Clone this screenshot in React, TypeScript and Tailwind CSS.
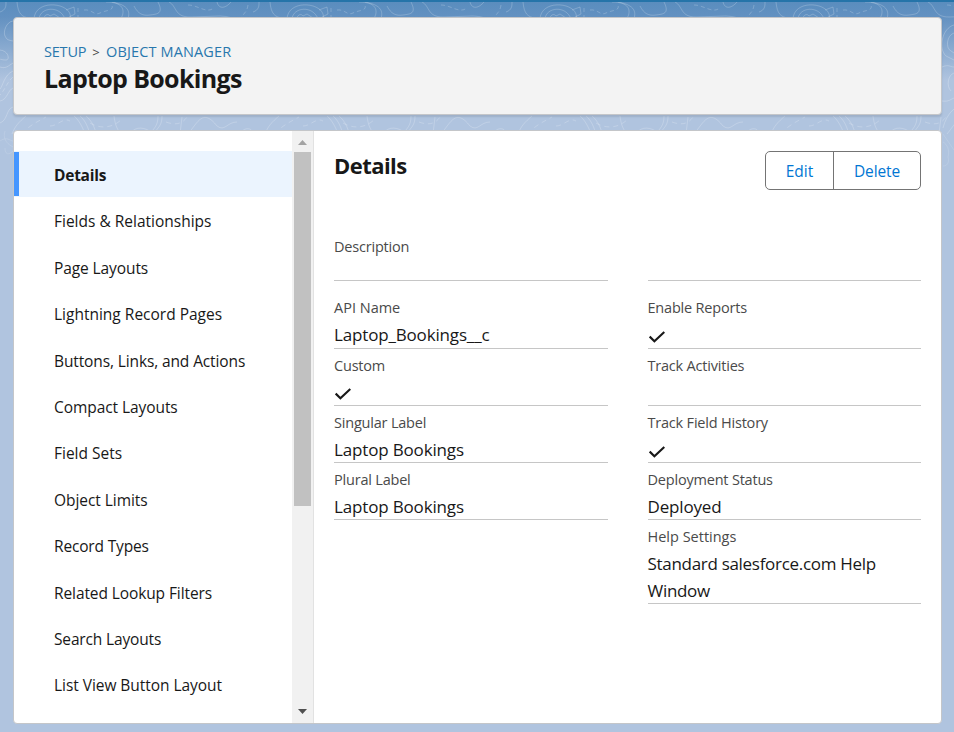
import { ReactNode } from "react";

const navItems: { label: string; track: string }[] = [
  { label: "Details", track: "tracking-[-0.25px]" },
  { label: "Fields & Relationships", track: "tracking-[0px]" },
  { label: "Page Layouts", track: "tracking-[-0.1px]" },
  { label: "Lightning Record Pages", track: "tracking-[0px]" },
  { label: "Buttons, Links, and Actions", track: "tracking-[-0.12px]" },
  { label: "Compact Layouts", track: "tracking-[-0.07px]" },
  { label: "Field Sets", track: "tracking-[0px]" },
  { label: "Object Limits", track: "tracking-[-0.05px]" },
  { label: "Record Types", track: "tracking-[-0.17px]" },
  { label: "Related Lookup Filters", track: "tracking-[-0.1px]" },
  { label: "Search Layouts", track: "tracking-[-0.15px]" },
  { label: "List View Button Layout", track: "tracking-[-0.05px]" },
];

function Check({ spacing = "mt-[10px]" }: { spacing?: string }) {
  return (
    <svg className={`${spacing} ml-px block h-3 w-4`} viewBox="0 0 16 12" fill="none">
      <path d="M0.7 5.6 5.4 10.3 15.3 0.9" stroke="#181818" strokeWidth="2.1" />
    </svg>
  );
}

type FieldProps = {
  label: string;
  children?: ReactNode;
  height?: string;
  labelTrack?: string;
  valueTrack?: string;
};

function Field({
  label,
  children,
  height = "h-[57px]",
  labelTrack = "tracking-[-0.2px]",
  valueTrack = "tracking-[-0.16px]",
}: FieldProps) {
  return (
    <div className={`${height} border-b border-[#c6c6c6]`}>
      <div className={`${labelTrack} pt-1.5 text-[14.5px] leading-[22px] text-[#4a4a4a]`}>{label}</div>
      <div className={`${valueTrack} pt-[2px] text-[17px] leading-[27px] text-[#181818]`}>{children}</div>
    </div>
  );
}

const contours = (
  <g fill="none" stroke="#fff" strokeOpacity=".2" strokeWidth="1">
    <path d="M34 17C35-2 66 0 70 12L71 17M39 17C40 5 60 3 65 17M44 17c0-4 4-6 6-3l4-2 6 4M66 8l8-3 1 7-6 3" />
    <path d="M106 0C126 0 125 11 120 18M112 0C134 4 128 14 128 18M134 4C138 12 143 14 150 13C157 12 164 12 158 0M169 0C177 4 174 15 190 15L220 14C228 14 234 17 242 18" />
    <path d="M17 0C18 12 22 15 29 16M0 10C6 8 6 4 6 0M217 0c2 8 9 6 14 0" />
    <path d="M78 6v10M84 8c8-1 10 6 16 3s14-2 12-8M188 3c10 0 18 9 26 3M248 3c-1 8-6 10-9 15" strokeDasharray="4 3" />
    <path d="M74 114c5 4 9 12 11 18M80 114c6 5 8 12 10 18M86 114c6 5 9 12 10 18M131 131c4-7 15-6 21 0M162 114c0 8-2 10-9 18M158 114c0 10-4 12-8 18M180 132l2-17M188 132c10-12 15-26 29-8 8 6 10-4 20-4M240 132c4-8 14-6 12 0M114 114c1 7 2 12 7 18M12 132c3-8 7-12 14-18" />
    <path d="M90 121c12 7 24 4 32-4M166 120c11 4 17 1 21-5M50 124c8 0 13-9 20-5M22 132c6-8 15-12 24-17" strokeDasharray="5 4" />
  </g>
);

function Backdrop() {
  return (
    <svg className="absolute inset-0 -z-10 h-[200px] w-full" viewBox="0 0 954 200" fill="none">
      <defs>
        <pattern id="topo" width="253" height="200" patternUnits="userSpaceOnUse">{contours}</pattern>
      </defs>
      <rect width="954" height="132" fill="url(#topo)" />
      <g stroke="#fff" strokeOpacity=".22">
        <path d="M13 19C6 20 3 30 5 34s3 4 8 5M0 48C9 49 10 58 6 58S0 57 0 57M0 65c6 2 8-1 13-4M13 69C4 73 3 84 0 87M13 86C8 88 7 98 0 99M13 105C6 107 8 118 0 121" />
        <path d="M13 75C7 80 5 88 0 93" strokeDasharray="4 3" />
        <path d="M954 23c-12 3-16 24-8 31l8 4M954 31c-7 2-9 15-3 18l3 2M942 65c7-3 8 0 12 0M954 71c-6 2-8 13-3 18M942 99c7 1 9-2 12-3M943 126c2-8 6-15 11-19" />
      </g>
      <g stroke="#fff" strokeOpacity=".12">
        <path d="M5 129c-2 6 0 12 8 16M0 139c7-5 10 0 13 0M5 146c0 6 3 8 8 3M943 132l11 16M943 140c4 2 7 8 5 15M943 164c6 0 6-6 5-9" />
      </g>
    </svg>
  );
}

export default function App() {
  return (
    <div className="relative isolate flex h-[732px] w-[954px] flex-col gap-[15px] overflow-hidden border-t-2 border-[#2574a9] bg-[#b0c4df] bg-[linear-gradient(180deg,#5a8dbe_0px,#6391c1_15px,#b0c4df_78px)] pt-[15px] pr-3 pb-2 pl-[13px] font-['Open_Sans','Noto_Sans',sans-serif] text-[#181818]">
      <Backdrop />
      <header className="h-[98px] shrink-0 rounded border border-[#c4c6c9] bg-[#f3f3f3] pt-[23px] pl-[30px] shadow-[0_2px_2px_rgba(0,0,0,0.1)]">
        <nav className="flex text-[14.5px] leading-[22px] text-[#2877ad]">
          <a className="w-[42px] tracking-[-0.2px]">SETUP</a>
          <span className="w-5 text-center text-[13px] text-[#444]">&gt;</span>
          <a className="tracking-[0.14px]">OBJECT MANAGER</a>
        </nav>
        <h1 className="-mt-px text-[25px] leading-[33px] font-bold tracking-[-0.65px]">Laptop Bookings</h1>
      </header>

      <main className="flex min-h-0 flex-1 overflow-hidden rounded border border-[#c4c6c9] bg-white">
        <aside className="w-[278px] pt-5">
          {navItems.map((item, i) => (
            <div
              key={item.label}
              className={
                i === 0
                  ? "flex h-[46.4px] items-center bg-[#ebf4fe] text-[15.5px] font-bold"
                  : "flex h-[46.4px] items-center pl-10 text-[15.5px]"
              }
            >
              {i === 0 && <i className="mr-[35px] h-11 w-[5px] bg-[#4596ff]" />}
              <span className={`${item.track} pt-[3px]`}>{item.label}</span>
            </div>
          ))}
        </aside>
        <div className="flex w-[22px] flex-col items-center border-r border-[#e2e2e2] bg-[#f1f1f1]">
          <svg className="h-[21px] w-full shrink-0" viewBox="0 0 21 21"><path d="M6 14h9l-4.500-5z" fill="#a3a3a3" /></svg>
          <div className="h-[354px] w-[17px] bg-[#c1c1c1]" />
          <svg className="mt-auto h-[21px] w-full shrink-0" viewBox="0 0 21 21"><path d="M6 7h9l-4.500 5z" fill="#505050" /></svg>
        </div>
        <section className="flex-1 px-5 pt-5">
          <div className="flex items-start justify-between">
            <h2 className="-mt-px text-[22px] leading-[30px] font-bold tracking-[-0.55px]">Details</h2>
            <div className="flex h-[39px] rounded-[5px] border border-[#747474] text-[15.5px] leading-[38px] text-[#0176d3]">
              <button className="w-[68px] border-r border-[#747474]">Edit</button>
              <button className="w-[86px] tracking-[-0.1px]">Delete</button>
            </div>
          </div>
          <div className="mt-10 grid grid-cols-2 gap-x-10">
            <Field label="Description" height="h-[51px]" />
            <Field label="" height="h-[51px]" />
          </div>
          <div className="mt-2.5 grid grid-cols-2 gap-x-10">
            <div>
              <Field label="API Name" height="h-[58px]" labelTrack="tracking-[0px]">Laptop_Bookings__c</Field>
              <Field label="Custom"><Check spacing="mt-[9px]" /></Field>
              <Field label="Singular Label">Laptop Bookings</Field>
              <Field label="Plural Label">Laptop Bookings</Field>
            </div>
            <div>
              <Field label="Enable Reports" height="h-[58px]"><Check /></Field>
              <Field label="Track Activities" />
              <Field label="Track Field History"><Check /></Field>
              <Field label="Deployment Status">Deployed</Field>
              <Field label="Help Settings" height="h-[84px]" labelTrack="tracking-[0px]" valueTrack="tracking-[-0.3px]">
                Standard salesforce.com Help Window
              </Field>
            </div>
          </div>
        </section>
      </main>
    </div>
  );
}
